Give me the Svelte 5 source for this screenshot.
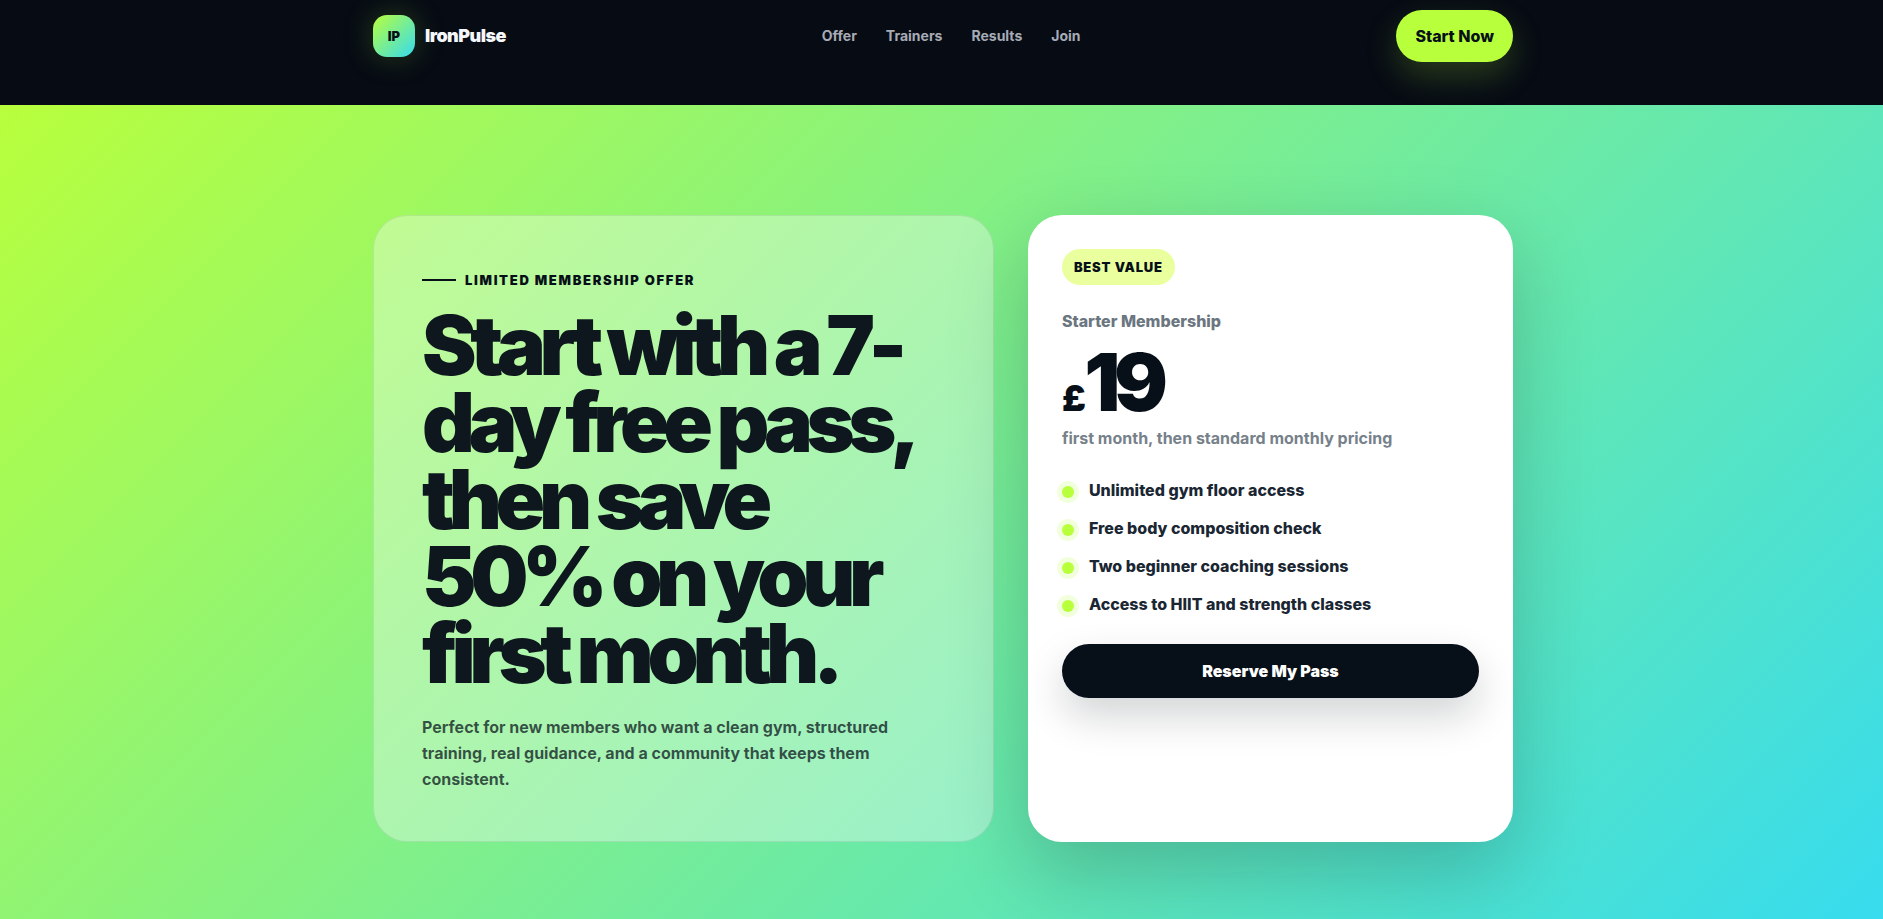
<script lang="ts">
	const links = [
		{ label: 'Offer', href: '#offer' },
		{ label: 'Trainers', href: '#trainers' },
		{ label: 'Results', href: '#results' },
		{ label: 'Join', href: '#join' }
	];

	const perks = [
		'Unlimited gym floor access',
		'Free body composition check',
		'Two beginner coaching sessions',
		'Access to HIIT and strength classes'
	];
</script>

<header class="topbar">
	<div class="container topbar-inner">
		<a class="brand" href="#top">
			<span class="brand-mark">IP</span>
			<span class="brand-name">IronPulse</span>
		</a>
		<nav class="nav" aria-label="Main">
			{#each links as link}
				<a href={link.href}>{link.label}</a>
			{/each}
		</nav>
		<button class="btn btn-start" type="button">Start Now</button>
	</div>
</header>

<section class="offer" id="offer">
	<div class="container offer-grid">
		<div class="pitch">
			<div class="eyebrow">Limited membership offer</div>
			<h1>Start with a 7-day free pass, then save 50% on your first month.</h1>
			<p>
				Perfect for new members who want a clean gym, structured training, real guidance, and a
				community that keeps them consistent.
			</p>
		</div>

		<div class="plan">
			<span class="tag">Best value</span>
			<div class="plan-name">Starter Membership</div>
			<div class="price"><span class="currency">£</span>19</div>
			<div class="plan-note">first month, then standard monthly pricing</div>
			<ul class="perks">
				{#each perks as perk}
					<li>{perk}</li>
				{/each}
			</ul>
			<button class="btn btn-reserve" type="button">Reserve My Pass</button>
		</div>
	</div>
</section>

<style>
	:global(body) {
		--ink: #071018;
		--lime: #b8ff3c;
		--cyan: #35dbf0;
		background: #060b14;
		color: var(--ink);
		font-family: Inter, 'Liberation Sans', sans-serif;
		font-size: 16px;
		line-height: 26px;
		overflow-x: hidden;
	}

	.container {
		box-sizing: border-box;
		max-width: 1143px;
		margin: 0 auto;
		padding-left: 3px;
	}

	.topbar {
		padding: 10px 0 43px;
	}

	.topbar-inner {
		display: flex;
		align-items: center;
		justify-content: space-between;
	}

	.brand {
		display: flex;
		align-items: center;
		gap: 10px;
		color: #f5f7fb;
		text-decoration: none;
	}

	.brand-mark {
		display: grid;
		place-items: center;
		width: 42px;
		height: 42px;
		border-radius: 14px;
		background: linear-gradient(135deg, var(--lime), var(--cyan));
		box-shadow: 0 0 32px rgba(184, 255, 60, 0.22);
		color: var(--ink);
		font-size: 13px;
		font-weight: 900;
	}

	.brand-name {
		font-size: 18px;
		font-weight: 900;
		letter-spacing: -0.03em;
	}

	.nav {
		display: flex;
		gap: 29px;
	}

	.nav a {
		color: #a6abb6;
		font-size: 14px;
		font-weight: 700;
		text-decoration: none;
	}

	.btn {
		border: 0;
		border-radius: 999px;
		font-family: inherit;
		font-size: 16px;
		line-height: 26px;
		cursor: pointer;
	}

	.btn-start {
		padding: 13px 19px;
		background: var(--lime);
		box-shadow: 0 14px 34px rgba(184, 255, 60, 0.2);
		color: var(--ink);
		font-weight: 800;
	}

	.offer {
		padding: 110px 0;
		background: linear-gradient(135deg, var(--lime), var(--cyan));
	}

	.offer-grid {
		display: grid;
		grid-template-columns: 1.28fr 1fr;
		gap: 34px;
	}

	.pitch {
		padding: 54px 48px 49px;
		border: 1px solid rgba(7, 16, 24, 0.08);
		border-radius: 34px;
		background: rgba(255, 255, 255, 0.34);
	}

	.eyebrow {
		display: flex;
		align-items: center;
		gap: 9px;
		font-size: 13px;
		font-weight: 900;
		line-height: 20px;
		letter-spacing: 0.13em;
		text-transform: uppercase;
	}

	.eyebrow::before {
		content: '';
		width: 34px;
		height: 2px;
		background: var(--ink);
	}

	h1 {
		margin: 17px 0 22px;
		color: #0d171d;
		font-size: 82px;
		font-weight: 900;
		line-height: 77px;
		letter-spacing: -0.078em;
	}

	p {
		margin: 0;
		color: rgba(7, 16, 24, 0.72);
		font-weight: 700;
	}

	.plan {
		padding: 34px;
		border-radius: 34px;
		background: #fff;
		box-shadow: 0 30px 80px rgba(7, 16, 24, 0.22);
	}

	.tag {
		display: inline-block;
		padding: 8px 12px;
		border-radius: 999px;
		background: #eaff9e;
		font-size: 13px;
		font-weight: 900;
		line-height: 20px;
		letter-spacing: 0.06em;
		text-transform: uppercase;
		vertical-align: top;
	}

	.plan-name {
		margin-top: 23px;
		color: #6b7680;
		font-weight: 800;
	}

	.price {
		margin: 8px 0 3px;
		font-size: 80px;
		font-weight: 900;
		line-height: 80px;
		letter-spacing: -0.08em;
	}

	.currency {
		font-size: 36px;
		line-height: 36px;
		letter-spacing: -0.04em;
	}

	.plan-note {
		color: #76818a;
		font-weight: 700;
	}

	.perks {
		display: grid;
		gap: 12px;
		margin: 26px 0 27px;
		padding: 0;
		list-style: none;
	}

	.perks li {
		display: flex;
		gap: 15px;
		color: #1a2733;
		font-weight: 800;
	}

	.perks li::before {
		content: '';
		width: 12px;
		height: 12px;
		margin-top: 9px;
		border-radius: 50%;
		background: var(--lime);
		box-shadow: 0 0 0 5px rgba(184, 255, 60, 0.18);
	}

	.btn-reserve {
		width: 100%;
		padding: 14px 20px;
		background: var(--ink);
		box-shadow: 0 18px 40px rgba(7, 16, 24, 0.18);
		color: #fff;
		font-weight: 900;
	}

	@media (max-width: 1180px) {
		.container {
			padding: 0 20px;
		}
	}

	@media (max-width: 900px) {
		.nav {
			display: none;
		}

		.offer-grid {
			grid-template-columns: 1fr;
		}

		h1 {
			font-size: 56px;
			line-height: 54px;
		}
	}
</style>
